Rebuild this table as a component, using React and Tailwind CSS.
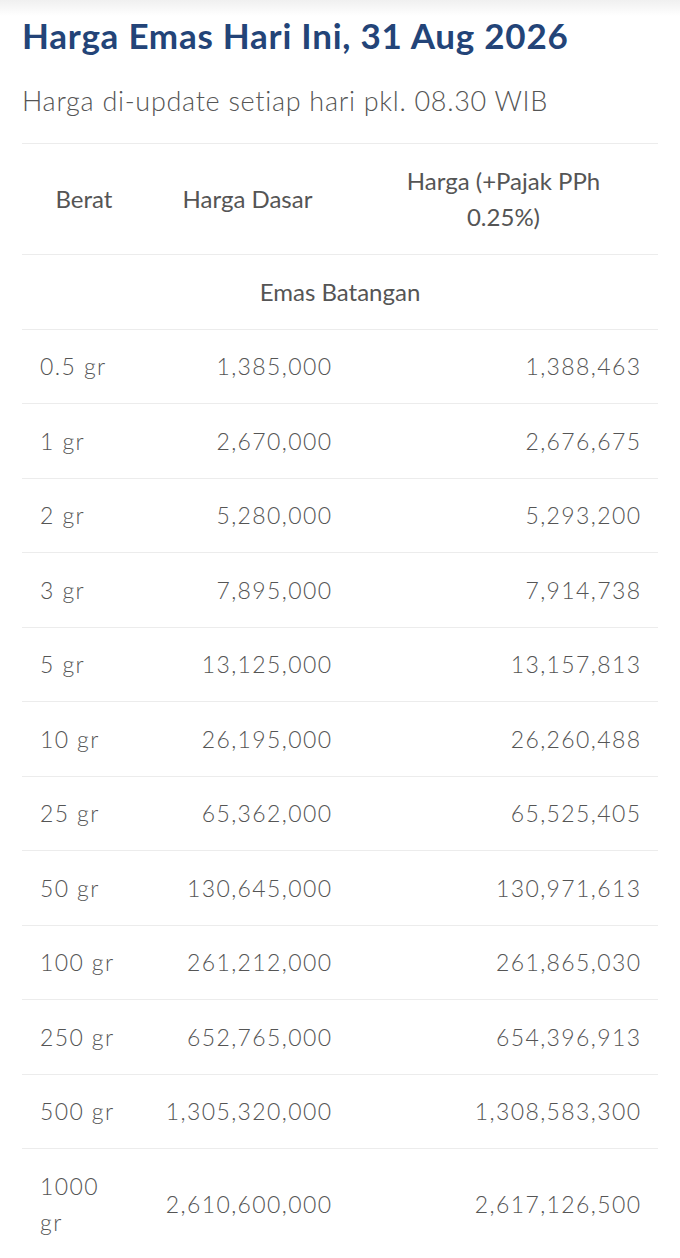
const rows = [
  ["0.5 gr", "1,385,000", "1,388,463"],
  ["1 gr", "2,670,000", "2,676,675"],
  ["2 gr", "5,280,000", "5,293,200"],
  ["3 gr", "7,895,000", "7,914,738"],
  ["5 gr", "13,125,000", "13,157,813"],
  ["10 gr", "26,195,000", "26,260,488"],
  ["25 gr", "65,362,000", "65,525,405"],
  ["50 gr", "130,645,000", "130,971,613"],
  ["100 gr", "261,212,000", "261,865,030"],
  ["250 gr", "652,765,000", "654,396,913"],
  ["500 gr", "1,305,320,000", "1,308,583,300"],
  ["1000 gr", "2,610,600,000", "2,617,126,500"],
];

export default function App() {
  return (
    <div className="min-h-[1258px] bg-white font-['Lato',sans-serif]">
      <div className="h-4 bg-gradient-to-b from-[#f0f0f0] to-white" />
      <div className="px-[22px]">
        <h1 className="-mt-[1px] text-[35px] font-bold leading-[40px] tracking-[0.75px] text-[#234478]">
          Harga Emas Hari Ini, 31 Aug 2026
        </h1>
        <p className="mt-[30px] text-[27px] font-light leading-[32px] tracking-[0.7px] text-[#555]">
          Harga di-update setiap hari pkl. 08.30 WIB
        </p>
        <table className="mt-[26px] w-full table-fixed border-collapse text-[#555]">
          <colgroup>
            <col className="w-[124px]" />
            <col className="w-[203px]" />
            <col />
          </colgroup>
          <thead className="text-[24px] leading-[36.5px]">
            <tr className="border-t border-b border-[#ececec]">
              <th className="px-[18px] py-[18.5px] text-center font-normal">Berat</th>
              <th className="px-[18px] py-[18.5px] text-center font-normal">Harga Dasar</th>
              <th className="px-[18px] py-[18.5px] text-center font-normal">
                <span className="mx-auto block max-w-[220px]">Harga (+Pajak PPh 0.25%)</span>
              </th>
            </tr>
          </thead>
          <tbody className="text-[23px] font-light leading-[36.5px] tracking-[1.4px]">
            <tr className="border-b border-[#ececec]">
              <td colSpan={3} className="px-[18px] py-[18.5px] text-center text-[24px] font-normal tracking-normal">
                Emas Batangan
              </td>
            </tr>
            {rows.map((r, i) => (
              <tr key={r[0]} className={i < rows.length - 1 ? "border-b border-[#ececec]" : ""}>
                <td className="px-[18px] py-[18.5px] text-left">{r[0]}</td>
                <td className="py-[18.5px] pl-[18px] pr-[16.5px] text-right">{r[1]}</td>
                <td className="py-[18.5px] pl-[18px] pr-[16.5px] text-right">{r[2]}</td>
              </tr>
            ))}
          </tbody>
        </table>
      </div>
    </div>
  );
}
